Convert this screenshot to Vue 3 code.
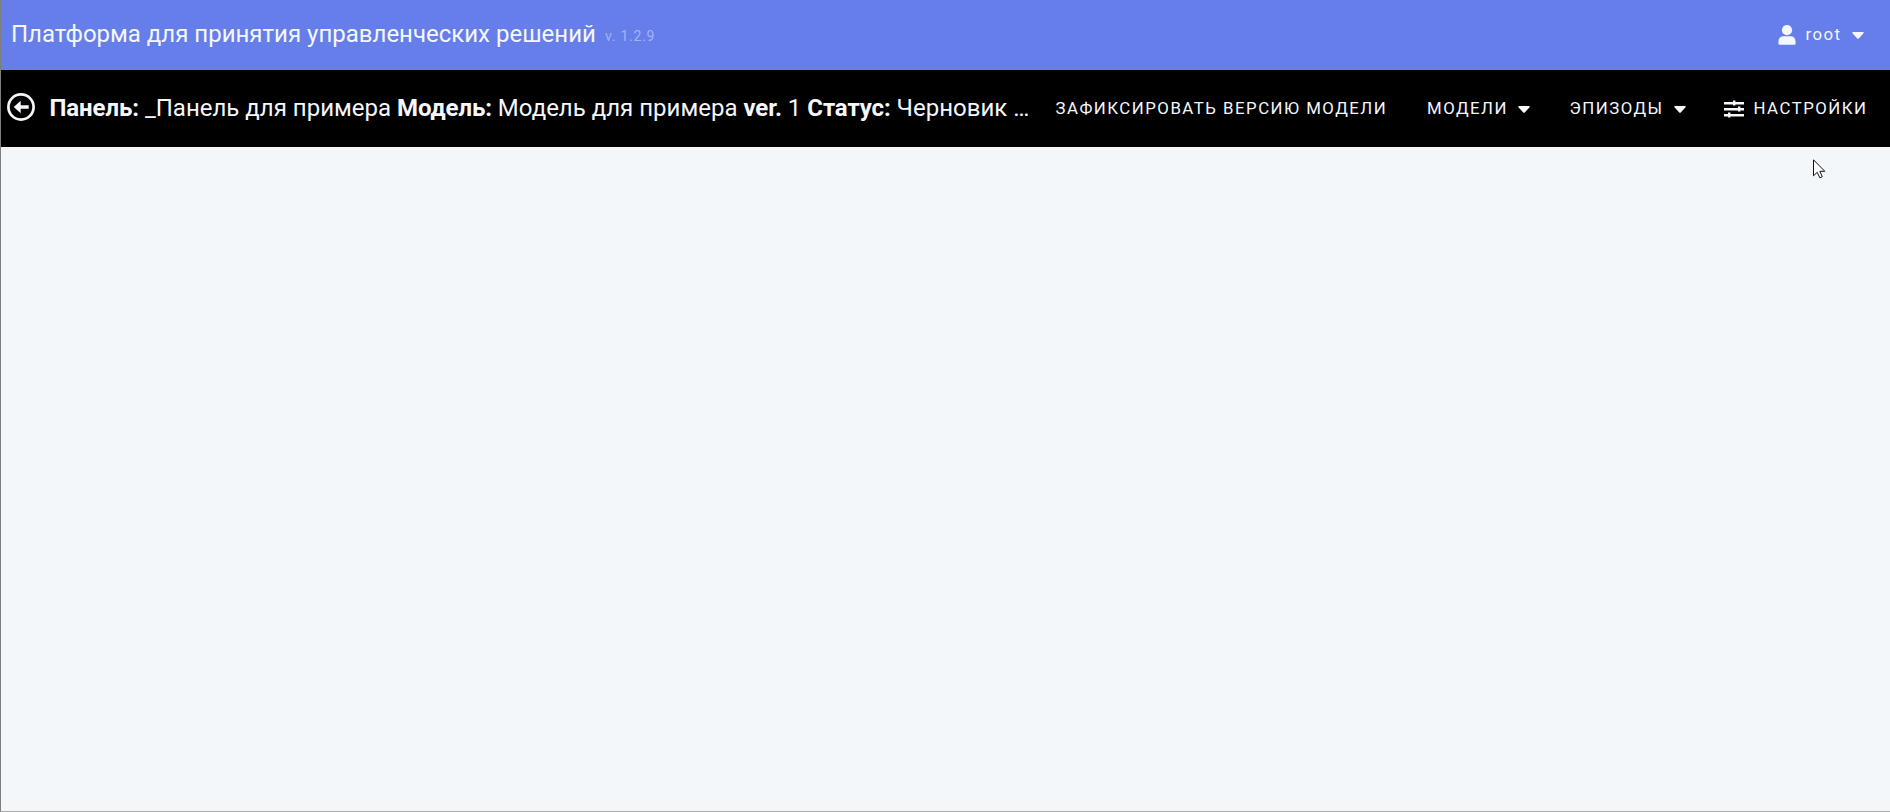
<script setup>
const caret = 'M1 0H11Q12.3 .2 11.3 1.5L7 6.3Q6 7.3 5 6.3L.7 1.5Q-.3 .2 1 0Z'
</script>

<template>
  <div class="page">
    <header class="top">
      <div class="brand">Платформа для принятия управленческих решений</div>
      <div class="version">v. 1.2.9</div>
      <div class="user">
        <svg class="avatar" width="18" height="20" viewBox="0 0 18 20"><circle cx="9" cy="5.2" r="5.1" /><path d="M5 11.2H13Q17.6 11.8 17.6 17V18.2Q17.5 19.7 16 19.8H2Q.5 19.7 .4 18.2V17Q.4 11.8 5 11.2Z" /></svg>
        <span class="name">root</span>
        <svg class="caret" width="12" height="7" viewBox="0 0 12 7"><path :d="caret" /></svg>
      </div>
    </header>
    <nav class="bar">
      <svg class="back" width="28" height="28" viewBox="0 0 28 28"><circle cx="14" cy="14" r="12.6" /><path d="M6.7 14L13.7 7.7V12.2H21.7V15.8H13.7V20.3Z" /></svg>
      <div class="title"><b>Панель:</b> _Панель для примера <b>Модель:</b> Модель для примера <b>ver.</b> 1 <b>Статус:</b> Черновик …</div>
      <div class="item fix">ЗАФИКСИРОВАТЬ ВЕРСИЮ МОДЕЛИ</div>
      <div class="item models">МОДЕЛИ<svg class="caret" width="12" height="7" viewBox="0 0 12 7"><path :d="caret" /></svg></div>
      <div class="item episodes">ЭПИЗОДЫ<svg class="caret" width="12" height="7" viewBox="0 0 12 7"><path :d="caret" /></svg></div>
      <div class="item settings">
        <svg class="sliders" width="20" height="18" viewBox="0 0 20 18"><path d="M0 2h20v2.4H0zM0 8h20v2.4H0zM0 14h20v2.4H0zM9 .6h2.4v5H9zM14 6.6h2.4v5H14zM4 12.6h2.4v5H4z" /></svg>НАСТРОЙКИ
      </div>
    </nav>
    <main class="content">
      <svg class="cursor" width="13" height="20" viewBox="0 0 13 20"><path d="M.5 .8V16.8L4.2 13.3L6.9 18.8L9.3 17.7L6.8 12.3H11.8Z" /></svg>
    </main>
  </div>
</template>

<style>
body { margin: 0; overflow: hidden; }
</style>

<style scoped>
.page {
  box-sizing: border-box;
  width: 100%;
  height: 812px;
  display: flex;
  flex-direction: column;
  border-left: 1px solid #7e7e7e;
  border-bottom: 1px solid #a8a9aa;
  background: #f3f7fa;
  color: #f5f7fd;
  font-family: Roboto, sans-serif;
  white-space: nowrap;
}
svg { flex: none; fill: currentColor; }
.top { height: 70px; display: flex; align-items: center; background: #667eea; }
.brand { margin: -3px 0 0 10px; font-size: 24px; line-height: 36px; width: 584px; }
.version { margin: 2px 0 0 10px; color: #a3b3fa; font-size: 14px; letter-spacing: .75px; }
.user { margin: 0 26px 0 auto; display: flex; align-items: center; font-size: 16.8px; letter-spacing: 1.45px; }
.name { margin: -3px 10.5px 0 9.5px; }
.bar { height: 77px; display: flex; align-items: center; background: #000; }
.back { margin: -3px 0 0 6px; }
.back circle { fill: none; stroke: currentColor; stroke-width: 2.7; }
.title { margin: -2px 0 0 14.5px; width: 979px; font-size: 24px; line-height: 36px; }
.title b { font-weight: 700; letter-spacing: -.1px; }
.item { display: flex; align-items: center; margin-top: -2px; font-size: 16.8px; letter-spacing: 1.5px; }
.fix { margin-left: 27px; width: 371.5px; }
.models { width: 142.5px; }
.episodes { width: 154px; }
.item .caret { margin: 4px 0 0 10px; }
.sliders { margin: 2px 10px 0 0; }
.content { flex: 1; position: relative; }
.cursor { position: absolute; left: 1812px; top: 12px; }
.cursor path { fill: #fff; stroke: #101018; stroke-width: 1; }
</style>
